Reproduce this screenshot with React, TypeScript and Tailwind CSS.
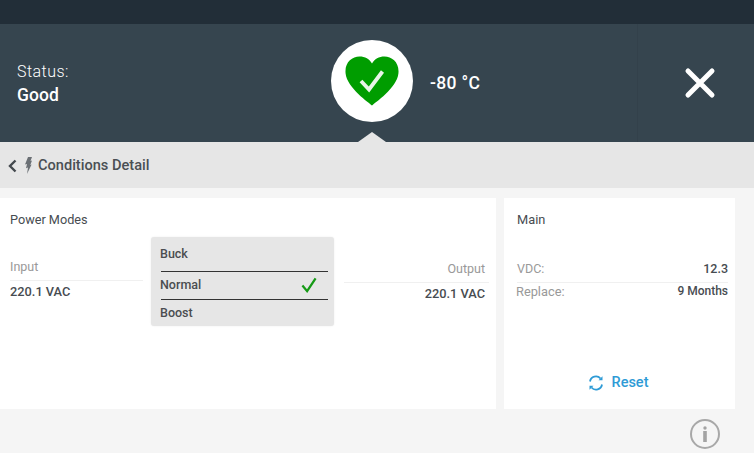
const FONT = 'font-["Roboto",sans-serif]';

function Heart() {
  return (
    <svg width="54" height="50" viewBox="0 0 54 50">
      <path
        d="M27 49.5C24.5 47 2 32 .6 17.5-.6 6.500 7 .5 14.500 .5 20 .5 24.500 3 27 7.500 29.500 3 34 .5 39.500 .5 47 .5 54.600 6.500 53.400 17.500 52 32 29.500 47 27 49.500Z"
        fill="#009d00"
      />
      <path d="M16 25l8 8.500L37.500 15.500" fill="none" stroke="#e8f5e8" strokeWidth="3.800" />
    </svg>
  );
}

function Bolt() {
  return (
    <svg width="10" height="17" viewBox="0 0 10 17" className="text-[#6b7075]">
      <path d="M5 0h4L7.500 4 9 3.500 7.300 8 8.600 7.500 4 17l1-6.500-2 .8L4 7 2 7.600Z" fill="currentColor" />
    </svg>
  );
}

function ResetIcon() {
  return (
    <svg width="16" height="16" viewBox="0 0 16 16" fill="none" stroke="#2e9bd6" strokeWidth="1.800">
      <path d="M2 6.500A6 6 0 0 1 12.500 3.500" />
      <path d="M14 9.500A6 6 0 0 1 3.500 12.500" />
      <path d="M14.500 1.200v4h-4z" fill="#2e9bd6" stroke="none" />
      <path d="M1.500 14.800v-4h4z" fill="#2e9bd6" stroke="none" />
    </svg>
  );
}

function ModeRow({ label, checked }: { label: string; checked?: boolean }) {
  return (
    <div className="flex h-full items-center justify-between pr-[17px] text-[12.500px] font-medium text-[#4a4d50]">
      <span>{label}</span>
      {checked && (
        <svg width="16" height="16" viewBox="0 0 17 16" fill="none" className="-translate-y-px">
          <path d="M1.500 8.500l5 6L15.500 1" stroke="#169a16" strokeWidth="2.400" />
        </svg>
      )}
    </div>
  );
}

export default function App() {
  return (
    <div className={`${FONT} flex h-[453px] w-[754px] flex-col overflow-hidden bg-[#f5f5f5]`}>
      <div className="h-6 shrink-0 bg-[#222e38]" />

      <header className="relative flex h-[118px] shrink-0 bg-[#36454f]">
        <div className="flex flex-1 flex-col pl-[17px] pt-[38px] text-white">
          <div className="text-[16px] leading-5 font-light tracking-[0.45px]">Status:</div>
          <div className="mt-[2px] text-[17.500px] leading-[22px] font-medium tracking-[0.1px]">Good</div>
        </div>
        <div className="flex w-[117px] items-center justify-center border-l border-[#33414b] pl-[8px] pb-[1px]">
          <svg width="32" height="32" viewBox="0 0 32 32" fill="none" stroke="white" strokeWidth="5" strokeLinecap="round">
            <path d="M4 4l24 24M28 4L4 28" />
          </svg>
        </div>

        <div className="absolute left-[331px] top-[16px] flex h-[82px] w-[82px] items-center justify-center rounded-full bg-white">
          <Heart />
        </div>
        <div className="absolute left-[430px] top-[49px] text-[17.500px] leading-5 font-medium tracking-[0.3px] text-white">-80 °C</div>
        <div className="absolute bottom-0 left-[358px] h-0 w-0 border-x-[14px] border-b-[10px] border-x-transparent border-b-[#e6e6e6]" />
      </header>

      <div className="flex h-[46px] shrink-0 items-center bg-[#e6e6e6] pl-[8px] pt-px">
        <svg width="9" height="14" viewBox="0 0 9 14" fill="none" stroke="#44494e" strokeWidth="2.400">
          <path d="M7.500 1.500L2 7l5.500 5.500" />
        </svg>
        <span className="ml-[6px] mr-[5px] flex">
          <Bolt />
        </span>
        <span className="text-[14.600px] font-medium text-[#4a4f54]">Conditions Detail</span>
      </div>

      <main className="mt-[10px] flex h-[211px] shrink-0 gap-2 pr-[19px]">
        <section className="relative w-[496px] bg-white pl-[10px] pr-[7px] pt-[14px]">
          <h2 className="text-[12.700px] leading-[15px] font-normal text-[#474c51]">Power Modes</h2>
          <div className="mt-[32px] flex justify-between">
            <div className="w-[133px]">
              <div className="border-b border-[#f0f0f0] pb-[6px] text-[12.500px] leading-[15px] text-[#999]">Input</div>
              <div className="mt-[3px] text-[12.800px] leading-[15px] font-medium text-[#474c51]">220.1 VAC</div>
            </div>
            <div className="w-[145px] pt-[2px] text-right">
              <div className="border-b border-[#f0f0f0] pb-[6px] pr-[4px] text-[12.500px] leading-[15px] text-[#999]">Output</div>
              <div className="mt-[3px] pr-[4px] text-[12.800px] leading-[15px] font-medium text-[#474c51]">220.1 VAC</div>
            </div>
          </div>

          <div className="absolute left-[151px] top-[39px] w-[183px] rounded-[3px] bg-[#e6e6e6] pl-[9px] pt-[4px] shadow-[0_0_2px_rgba(0,0,0,0.08)]">
            <div className="mb-[3px] h-[27px]">
              <ModeRow label="Buck" />
            </div>
            <div className="ml-[1px] mr-[6px] h-px bg-[#333]" />
            <div className="h-[27px]">
              <ModeRow label="Normal" checked />
            </div>
            <div className="ml-[1px] mr-[6px] h-px bg-[#333]" />
            <div className="h-[26px]">
              <ModeRow label="Boost" />
            </div>
          </div>
        </section>

        <section className="flex flex-1 flex-col bg-white pl-[13px] pr-[7px] pt-[14px]">
          <h2 className="text-[12.800px] leading-[15px] font-normal text-[#474c51]">Main</h2>
          <div className="mt-[34px] flex items-center justify-between border-b border-[#f0f0f0] pb-[6px] text-[12.500px] leading-[15px]">
            <span className="text-[#999]">VDC:</span>
            <span className="font-medium text-[#474c51]">12.3</span>
          </div>
          <div className="-ml-px mt-[1px] flex items-center justify-between leading-[15px]">
            <span className="text-[12.800px] text-[#999]">Replace:</span>
            <span className="text-[12px] font-medium text-[#474c51]">9 Months</span>
          </div>
          <div className="mt-[73px] flex items-center justify-center gap-[8px] pr-[9px] text-[14.500px] font-medium text-[#2e9bd6]">
            <ResetIcon />
            <span>Reset</span>
          </div>
        </section>
      </main>

      <div className="flex flex-1 justify-end pr-[34px] pt-[10px]">
        <div className="flex h-[30px] w-[30px] items-center justify-center rounded-full border-2 border-[#a8a8a8] bg-[#f5f5f5]">
          <svg width="6" height="16" viewBox="0 0 6 16" fill="#a3a3a3">
            <circle cx="3" cy="2" r="1.700" />
            <rect x="1.200" y="5" width="3.600" height="11" />
          </svg>
        </div>
      </div>
    </div>
  );
}
